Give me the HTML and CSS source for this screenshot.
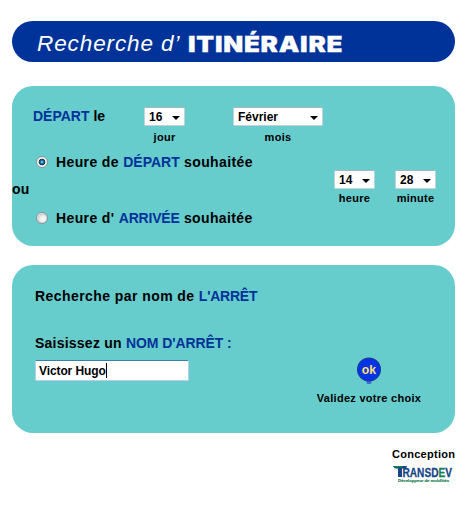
FILE: index.html
```html
<!DOCTYPE html>
<html lang="fr">
<head>
<meta charset="utf-8">
<title>Recherche d’itinéraire</title>
<link rel="stylesheet" href="styles.css">
</head>
<body>
<main class="page">
  <h1 class="banner"><span class="banner-light">Recherche d’</span><span class="banner-heavy">ITINÉRAIRE</span></h1>

  <section class="panel schedule">
    <div class="date-row">
      <div class="text date-title"><em>DÉPART</em> le</div>
      <div class="field day"><div class="select"><span>16</span><i class="arrow"></i></div><span class="caption">jour</span></div>
      <div class="field month"><div class="select"><span>Février</span><i class="arrow"></i></div><span class="caption">mois</span></div>
    </div>
    <div class="time-row">
      <div class="options">
        <div class="option"><i class="radio checked"></i><span class="text wide">Heure de <em>DÉPART</em> souhaitée</span></div>
        <div class="text or">ou</div>
        <div class="option"><i class="radio"></i><span class="text wide">Heure d' <em class="arrival">ARRIVÉE</em> souhaitée</span></div>
      </div>
      <div class="field hour"><div class="select"><span>14</span><i class="arrow"></i></div><span class="caption">heure</span></div>
      <div class="field minute"><div class="select"><span>28</span><i class="arrow"></i></div><span class="caption">minute</span></div>
    </div>
  </section>

  <section class="panel stop">
    <div class="search">
      <div class="text stop-title">Recherche par nom de <em>L'ARRÊT</em></div>
      <div class="text stop-label">Saisissez un <em>NOM D'ARRÊT :</em></div>
      <div class="input"><span>Victor Hugo</span><i class="caret"></i></div>
    </div>
    <div class="submit">
      <svg class="ok" width="26" height="28" viewBox="0 0 26 28">
        <path d="M10 23h6l-1 4h-4z" fill="#3f6ed0"/>
        <circle cx="13" cy="12.5" r="11.4" fill="#0633e6" stroke="#173a9c" stroke-width="1.2"/>
        <text x="5.8" y="16.5" textLength="14.2" lengthAdjust="spacingAndGlyphs" class="ok-text">ok</text>
      </svg>
      <span class="caption">Validez votre choix</span>
    </div>
  </section>

  <footer class="credit">
    <span class="caption">Conception</span>
    <svg class="logo" width="62" height="20" viewBox="0 0 62 20">
      <path d="M1 2h14l-1 2.6h-4V13H6V4.6H3z" fill="#164787"/>
      <path d="M1 2h10l-1 1.5H2z" fill="#168052"/>
      <text x="10.5" y="12.6" textLength="49.5" lengthAdjust="spacingAndGlyphs" class="logo-name">RANSD<tspan class="green">E</tspan>V</text>
      <text x="6" y="18" textLength="51" lengthAdjust="spacingAndGlyphs" class="logo-tag">Développeur de mobilités</text>
    </svg>
  </footer>
</main>
</body>
</html>
```
FILE: styles.css
```css
* { box-sizing: border-box; }
body { margin: 0; background: #fff; color: #000; font-family: "Liberation Sans", Arial, sans-serif; font-weight: bold; }
.page { width: 443px; margin-left: 12px; padding-top: 21px; }
em { font-style: normal; color: #003399; letter-spacing: 0; }

.banner { display: flex; align-items: center; height: 41px; margin: 0 0 24px; padding: 5px 0 0 25px; border-radius: 21px; background: #003399; color: #fff; white-space: pre; line-height: 30px; }
.banner-light { width: 151px; font-size: 22.5px; font-weight: normal; font-style: italic; letter-spacing: .9px; color: #fff; }
.banner-heavy { font-family: Inter, "Liberation Sans", sans-serif; font-size: 21.5px; font-weight: 900; letter-spacing: .6px; -webkit-text-stroke: .3px #fff; transform: scaleX(1.21); transform-origin: left; }

.panel { border-radius: 21px; background: #66cccc; }
.text { font-size: 14px; line-height: 18px; white-space: nowrap; }
.wide { letter-spacing: .38px; }
.caption { font-size: 11px; line-height: 14px; letter-spacing: .28px; white-space: nowrap; }

.field { display: flex; flex-direction: column; align-items: center; width: 41px; }
.select { display: flex; align-items: center; justify-content: space-between; width: 100%; height: 19px; padding: 1px 4px 0; border: 1px solid #c4d2d6; border-top-color: #aab5bb; border-radius: 2px; background: #fff; font-size: 12px; line-height: 17px; }
.arrow { width: 8px; height: 4px; margin-top: 2px; background: #000; clip-path: polygon(0 0, 100% 0, 50% 100%); }

.schedule { height: 160px; }
.date-row { display: flex; height: 66px; padding: 21px 0 0 21px; }
.date-title { width: 111px; }
.date-row .caption { margin-top: 4px; }
.month { width: 90px; margin-left: 48px; }
.time-row { display: flex; }
.options { width: 322px; }
.option { display: flex; align-items: center; height: 20px; padding-left: 24px; }
.option .text { margin-left: 8px; }
.arrival { letter-spacing: -.2px; }
.or { margin: 8px 0 10px; letter-spacing: .3px; }
.radio { width: 12px; height: 12px; border: 1px solid #8a9599; border-radius: 50%; background: radial-gradient(circle at 60% 60%, #f5f5f5 25%, #cfd3d4 60%, #fff 80%); }
.checked { background: radial-gradient(circle, #5fc3ea 0 8%, #16678f 25%, #123a59 42%, #f4f4f4 52%); }
.hour, .minute { margin-top: 18px; }
.hour .caption, .minute .caption { margin-top: 2px; }
.minute { margin-left: 20px; }

.stop { display: flex; height: 168px; margin-top: 19px; padding-left: 23px; }
.search { width: 282px; padding-top: 22px; }
.stop-title { letter-spacing: .43px; }
.stop-title em { letter-spacing: -.25px; }
.stop-label { margin-top: 29px; letter-spacing: .23px; }
.stop-label em { letter-spacing: -.08px; }
.input { display: flex; align-items: center; width: 154px; height: 21px; margin-top: 8px; padding-left: 3px; border: 1px solid #b5cfe7; border-top-color: #3d7bad; border-radius: 2px; background: #fff; font-size: 12px; letter-spacing: -.1px; }
.caret { width: 1px; height: 15px; background: #000; }
.submit { display: flex; flex-direction: column; align-items: center; width: 104px; padding-top: 92px; }
.submit .caption { margin-top: 6px; }
.ok { display: block; }
.ok-text { fill: #ffe070; font: bold 12px "Liberation Sans", sans-serif; }

.credit { display: flex; flex-direction: column; align-items: flex-start; margin: 14px 0 0 380px; }
.logo { display: block; margin-top: 3px; }
.logo-name { fill: #164787; stroke: #164787; stroke-width: .3px; font: bold 12px "Liberation Sans", sans-serif; }
.green { fill: #168052; stroke: #168052; }
.logo-tag { fill: #168052; stroke: #168052; stroke-width: .15px; font: bold 4px "Liberation Sans", sans-serif; }
```
